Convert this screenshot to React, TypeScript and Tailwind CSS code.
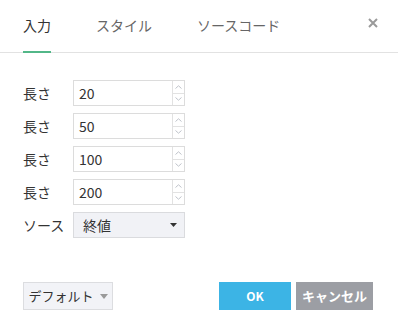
import React from "react";

const font = { fontFamily: '"Noto Sans CJK JP", "Noto Sans", sans-serif' };

function Spin({ value }: { value: string }) {
  return (
    <div className="flex h-[26px] w-[112px] border border-[#dcdcdc] bg-white">
      <div className="flex flex-1 items-center pl-[5px] text-[14px] text-[#333]">{value}</div>
      <div className="flex w-[12px] flex-col border-l border-[#e2e2e2]">
        <div className="flex flex-1 items-center justify-center border-b border-[#e2e2e2]">
          <svg width="7" height="4" viewBox="0 0 7 4"><path d="M0.5 3.5 L3.5 0.8 L6.5 3.5" fill="none" stroke="#b8bcc4" strokeWidth="0.9" /></svg>
        </div>
        <div className="flex flex-1 items-center justify-center">
          <svg width="7" height="4" viewBox="0 0 7 4"><path d="M0.5 0.5 L3.5 3.2 L6.5 0.5" fill="none" stroke="#b8bcc4" strokeWidth="0.9" /></svg>
        </div>
      </div>
    </div>
  );
}

export default function App() {
  const rows = ["20", "50", "100", "200"];
  return (
    <div className="flex h-[336px] w-[398px] flex-col bg-white" style={font}>
      <div className="relative flex h-[53px] border-b border-[#e2e2e2] pl-[23px] pr-[2px]">
        <div className="flex gap-[45px]">
          <div className="relative flex items-center pb-[2px] text-[14px] text-[#333]">
            入力
            <div className="absolute bottom-[-1px] left-0 h-[2px] w-[28px] bg-[#52b788]" />
          </div>
          <div className="flex items-center pb-[2px] text-[14px] text-[#666]">スタイル</div>
          <div className="flex items-center pb-[2px] text-[14px] text-[#666]">ソースコード</div>
        </div>
        <div className="absolute left-[368px] top-[18px]">
          <svg width="10" height="10" viewBox="0 0 10 10">
            <path d="M1 1 L9 9 M9 1 L1 9" stroke="#9a9a9a" strokeWidth="2" />
          </svg>
        </div>
      </div>
      <div className="flex flex-col gap-[7px] pl-[23px] pt-[27px]">
        {rows.map((v) => (
          <div key={v} className="flex items-center">
            <div className="w-[50px] text-[14px] text-[#333]">長さ</div>
            <Spin value={v} />
          </div>
        ))}
        <div className="flex items-center">
          <div className="w-[50px] text-[14px] text-[#333]">ソース</div>
          <div className="flex h-[26px] w-[112px] items-center justify-between border border-[#dadbde] bg-[#f1f2f6] pl-[9px] pr-[7px] text-[14px] text-[#333]">
            <span>終値</span>
            <svg width="7" height="4" viewBox="0 0 7 4"><path d="M0 0 L7 0 L3.5 4 Z" fill="#333" /></svg>
          </div>
        </div>
      </div>
      <div className="mt-[44px] flex items-center px-[23px]">
        <div className="flex h-[28px] w-[90px] items-center justify-center gap-[6px] border border-[#dcdde0] bg-[#f2f3f7] text-[13px] text-[#333]">
          <span>デフォルト</span>
          <svg width="8" height="5" viewBox="0 0 8 5"><path d="M0 0 L8 0 L4 5 Z" fill="#9a9a9a" /></svg>
        </div>
        <div className="ml-auto flex gap-[5px]">
          <div className="flex h-[28px] w-[72px] items-center justify-center bg-[#3cb4e5] text-[12px] font-bold text-white">OK</div>
          <div className="flex h-[28px] w-[77px] items-center justify-center bg-[#9c9ea4] text-[13px] font-bold text-white">キャンセル</div>
        </div>
        <div className="w-[2px]" />
      </div>
    </div>
  );
}
